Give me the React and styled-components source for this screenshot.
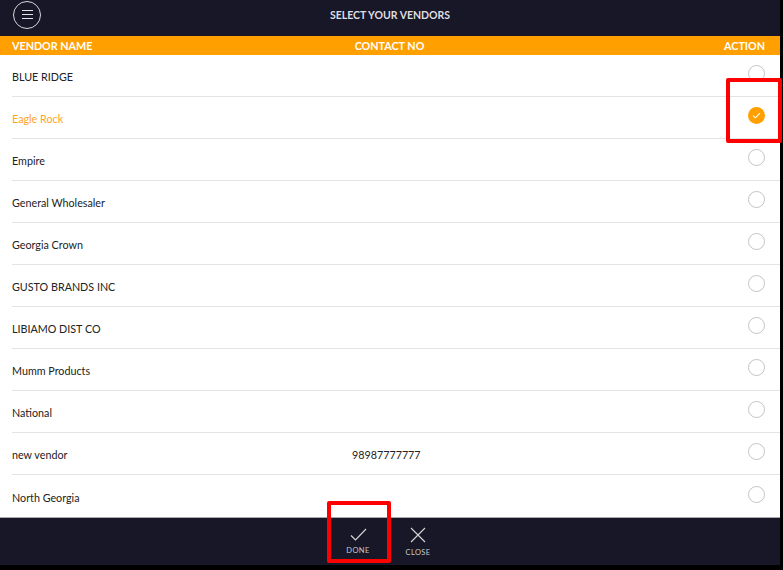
import React, { useState } from 'react'
import styled, { createGlobalStyle } from 'styled-components'

const GlobalStyle = createGlobalStyle`
  html, body {
    margin: 0;
    padding: 0;
    background: #000;
  }
  body {
    font-family: Lato, "Open Sans", sans-serif;
  }
`

const vendors = [
  { name: 'BLUE RIDGE', phone: '' },
  { name: 'Eagle Rock', phone: '' },
  { name: 'Empire', phone: '' },
  { name: 'General Wholesaler', phone: '' },
  { name: 'Georgia Crown', phone: '' },
  { name: 'GUSTO BRANDS INC', phone: '' },
  { name: 'LIBIAMO DIST CO', phone: '' },
  { name: 'Mumm Products', phone: '' },
  { name: 'National', phone: '' },
  { name: 'new vendor', phone: '98987777777' },
  { name: 'North Georgia', phone: '' },
]

function App() {
  const [selected, setSelected] = useState(['Eagle Rock'])

  const toggle = name =>
    setSelected(s => (s.includes(name) ? s.filter(n => n !== name) : [...s, name]))

  return (
    <Screen>
      <GlobalStyle />
      <Header>
        <MenuButton aria-label="menu">
          <span />
          <span />
          <span />
        </MenuButton>
        <Title>SELECT YOUR VENDORS</Title>
        <div />
      </Header>

      <HeadRow>
        <span>VENDOR NAME</span>
        <span className="center">CONTACT NO</span>
        <span className="right">ACTION</span>
      </HeadRow>

      <List>
        {vendors.map(v => {
          const on = selected.includes(v.name)
          return (
            <Row key={v.name} onClick={() => toggle(v.name)}>
              <Name $active={on}>{v.name}</Name>
              <Phone>{v.phone}</Phone>
              <Radio $checked={on}>
                {on && (
                  <svg width="9" height="7" viewBox="0 0 9 7">
                    <path d="M1 3.6 L3.4 5.8 L8 1.2" fill="none" stroke="#fff" strokeWidth="1.1" />
                  </svg>
                )}
              </Radio>
            </Row>
          )
        })}
      </List>

      <Footer>
        <FooterButton>
          <svg width="17" height="13" viewBox="0 0 17 13">
            <path d="M1 7.5 L5.5 12 L16 1" fill="none" stroke="#d8d8d8" strokeWidth="1.1" />
          </svg>
          <span>DONE</span>
        </FooterButton>
        <FooterButton>
          <svg width="16" height="16" viewBox="0 0 16 16">
            <path d="M1 1 L15 15 M15 1 L1 15" fill="none" stroke="#d8d8d8" strokeWidth="1.1" />
          </svg>
          <span>CLOSE</span>
        </FooterButton>
      </Footer>

      <Mark $top={78} $left={726} $w={56} $h={65} />
      <Mark $top={501} $left={327} $w={64} $h={62} />
    </Screen>
  )
}

const Screen = styled.div`
  position: relative;
  width: 780px;
  height: 565px;
  background: #fff;
  display: flex;
  flex-direction: column;
`

const Header = styled.div`
  height: 36px;
  background: #181727;
  display: grid;
  grid-template-columns: 60px 1fr 60px;
  align-items: center;
  padding-left: 13px;
`

const MenuButton = styled.div`
  width: 26px;
  height: 26px;
  border: 1.5px solid #d6d6dc;
  border-radius: 50%;
  display: flex;
  flex-direction: column;
  align-items: center;
  justify-content: center;
  gap: 2.5px;
  margin-top: -7px;

  span {
    display: block;
    width: 11px;
    height: 1.5px;
    background: #e2e2e6;
  }
`

const Title = styled.div`
  text-align: center;
  color: #dedee2;
  font-size: 10.5px;
  font-weight: 700;
  margin-left: -13px;
  margin-top: -7px;
`

const HeadRow = styled.div`
  height: 19px;
  background: #ffa000;
  display: grid;
  grid-template-columns: 1fr 1fr 1fr;
  align-items: center;
  padding: 0 15px 0 12px;
  color: #fff;
  font-size: 10.75px;
  font-weight: 700;

  .center {
    text-align: center;
    margin-left: 2px;
  }
  .right {
    text-align: right;
  }
`

const List = styled.div`
  flex: 1;
  display: flex;
  flex-direction: column;
`

const Row = styled.div`
  height: 42px;
  box-sizing: border-box;
  margin-left: 12px;
  padding-top: 2px;
  border-bottom: 1px solid #e4e4e4;
  display: grid;
  grid-template-columns: 340px 1fr 40px;
  align-items: center;
  cursor: pointer;

  &:last-child {
    border-bottom: none;
  }
`

const Name = styled.span`
  font-size: 10.75px;
  color: ${p => (p.$active ? '#ffa41c' : '#222')};
`

const Phone = styled.span`
  font-size: 10.75px;
  color: #222;
`

const Radio = styled.span`
  justify-self: end;
  margin-right: 15px;
  margin-top: -6px;
  width: 17px;
  height: 17px;
  box-sizing: border-box;
  border-radius: 50%;
  border: ${p => (p.$checked ? 'none' : '1px solid #c4c4c4')};
  background: ${p => (p.$checked ? '#ffa000' : '#fff')};
  display: flex;
  align-items: center;
  justify-content: center;
`

const Footer = styled.div`
  height: 48px;
  box-sizing: border-box;
  background: #181727;
  border-top: 1px solid #a9a9ad;
  display: flex;
  justify-content: center;
  align-items: center;
  padding-right: 4px;
`

const FooterButton = styled.div`
  width: 60px;
  display: flex;
  flex-direction: column;
  align-items: center;
  gap: 5px;
  color: #c9c9ce;
  font-size: 7.5px;
  letter-spacing: 0.4px;
`

const Mark = styled.div`
  position: absolute;
  top: ${p => p.$top}px;
  left: ${p => p.$left}px;
  width: ${p => p.$w}px;
  height: ${p => p.$h}px;
  box-sizing: border-box;
  border: 4px solid #ff0000;
  border-radius: 2px;
  pointer-events: none;
`

export default App
